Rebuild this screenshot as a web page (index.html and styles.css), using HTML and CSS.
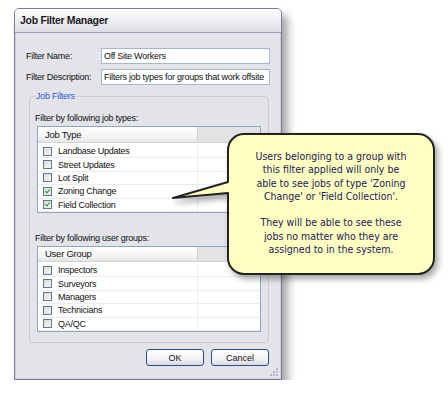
FILE: index.html
```html
<!DOCTYPE html>
<html lang="en">
<head>
    <meta charset="UTF-8">
    <title>Job Filter Manager</title>
    <link rel="stylesheet" href="styles.css">
</head>
<body>
<div class="page">
    <div class="dialog">
        <div class="titlebar">Job Filter Manager</div>
        <div class="dialog-body">
            <div class="field-row">
                <label class="field-label" for="filterName">Filter Name:</label>
                <input class="field-input" type="text" id="filterName" value="Off Site Workers">
            </div>
            <div class="field-row">
                <label class="field-label" for="filterDesc">Filter Description:</label>
                <input class="field-input" type="text" id="filterDesc" value="Filters job types for groups that work offsite">
            </div>

            <fieldset class="group-box">
                <legend>Job Filters</legend>

                <div class="list-label">Filter by following job types:</div>
                <div class="list-view list-jobs">
                    <div class="list-header">
                        <span class="col-main">Job Type</span>
                        <span class="col-extra"></span>
                    </div>
                    <div class="list-rows">
                        <div class="list-row"><span class="col-main"><span class="check"></span>Landbase Updates</span><span class="col-extra"></span></div>
                        <div class="list-row"><span class="col-main"><span class="check"></span>Street Updates</span><span class="col-extra"></span></div>
                        <div class="list-row"><span class="col-main"><span class="check"></span>Lot Split</span><span class="col-extra"></span></div>
                        <div class="list-row"><span class="col-main"><span class="check checked"></span>Zoning Change</span><span class="col-extra"></span></div>
                        <div class="list-row"><span class="col-main"><span class="check checked"></span>Field Collection</span><span class="col-extra"></span></div>
                        <div class="list-fill"><span class="col-main"></span><span class="col-extra"></span></div>
                    </div>
                </div>

                <div class="list-label second">Filter by following user groups:</div>
                <div class="list-view list-groups">
                    <div class="list-header">
                        <span class="col-main">User Group</span>
                        <span class="col-extra"></span>
                    </div>
                    <div class="list-rows">
                        <div class="list-row"><span class="col-main"><span class="check"></span>Inspectors</span><span class="col-extra"></span></div>
                        <div class="list-row"><span class="col-main"><span class="check"></span>Surveyors</span><span class="col-extra"></span></div>
                        <div class="list-row"><span class="col-main"><span class="check"></span>Managers</span><span class="col-extra"></span></div>
                        <div class="list-row"><span class="col-main"><span class="check"></span>Technicians</span><span class="col-extra"></span></div>
                        <div class="list-row"><span class="col-main"><span class="check"></span>QA/QC</span><span class="col-extra"></span></div>
                        <div class="list-fill"><span class="col-main"></span><span class="col-extra"></span></div>
                    </div>
                </div>
            </fieldset>

            <div class="button-row">
                <button class="dlg-button">OK</button>
                <button class="dlg-button">Cancel</button>
            </div>
        </div>
        <svg class="grip" width="9" height="9" viewBox="0 0 9 9">
            <rect x="6" y="0" width="2" height="2" fill="#b8b8c4"/>
            <rect x="3" y="3" width="2" height="2" fill="#b8b8c4"/>
            <rect x="6" y="3" width="2" height="2" fill="#b8b8c4"/>
            <rect x="0" y="6" width="2" height="2" fill="#b8b8c4"/>
            <rect x="3" y="6" width="2" height="2" fill="#b8b8c4"/>
            <rect x="6" y="6" width="2" height="2" fill="#b8b8c4"/>
        </svg>
    </div>
</div>

<!-- callout balloon over the dialog -->
<svg class="callout-shape" width="448" height="401" viewBox="0 0 448 401">
    <path d="M 244 134 H 418 A 16 16 0 0 1 434 150 V 258 A 16 16 0 0 1 418 274 H 244 A 16 16 0 0 1 228 258 V 193 L 173 198 L 228 182 V 150 A 16 16 0 0 1 244 134 Z"
          fill="#ffffc2" stroke="#222222" stroke-width="2" stroke-linejoin="round"/>
</svg>
<div class="callout-text">
    Users belonging to a group with<br>
    this filter applied will only be<br>
    able to see jobs of type 'Zoning<br>
    Change' or 'Field Collection'.<br>
    <br>
    They will be able to see these<br>
    jobs no matter who they are<br>
    assigned to in the system.
</div>
</body>
</html>
```

FILE: styles.css
```css
body {
    margin: 0;
    background: #ffffff;
    font-family: "Liberation Sans", Arial, sans-serif;
}
.page {
    padding: 8px 0 0 14px;
}
.dialog {
    position: relative;
    box-sizing: border-box;
    width: 268px;
    height: 372px;
    background: #e4e3ea;
    border: 1px solid #7c7c9a;
    border-radius: 5px 5px 0 0;
    box-shadow: inset 0 0 0 1px #cfcfdc, 6px 7px 9px rgba(0, 0, 0, 0.35);
}
.titlebar {
    height: 23px;
    line-height: 23px;
    padding-left: 5px;
    font-size: 10.5px;
    font-weight: bold;
    color: #1b1b24;
    letter-spacing: -0.3px;
    background: linear-gradient(#ffffff, #ececf1 60%, #dedde6);
    border-bottom: 1px solid #9c9cb4;
    border-radius: 4px 4px 0 0;
}
.dialog-body {
    padding: 15px 11px 0 11px;
    font-size: 9px;
    color: #111111;
    letter-spacing: -0.25px;
}
.field-row {
    display: flex;
    align-items: center;
    height: 16px;
    margin-bottom: 5px;
}
.field-row + .field-row {
    margin-bottom: 0;
}
.field-label {
    width: 75px;
}
.field-input {
    box-sizing: border-box;
    width: 169px;
    height: 16px;
    margin: 0;
    padding: 0 2px;
    border: 1px solid #a6b8cc;
    background: #ffffff;
    font-family: inherit;
    font-size: 9px;
    letter-spacing: -0.25px;
    color: #111111;
}
.group-box {
    margin: 5px 1px 0 3px;
    padding: 2px 7px 10px 7px;
    border: 1px solid #cdccd6;
    border-radius: 4px;
}
.group-box legend {
    margin-left: -2px;
    padding: 0 1px;
    color: #2a5bd6;
    font-size: 9px;
    line-height: 12px;
}
.list-label {
    line-height: 12px;
    margin: 8px 0 2px -2px;
}
.list-label.second {
    margin-top: 19px;
}
.list-view {
    box-sizing: border-box;
    background: #ffffff;
    border: 1px solid #8fa6bf;
    overflow: hidden;
    display: flex;
    flex-direction: column;
}
.list-jobs {
    height: 87px;
}
.list-jobs .list-header {
    height: 15px;
    line-height: 17px;
}
.list-groups {
    height: 86px;
}
.list-header {
    display: flex;
    flex: none;
    height: 14px;
    line-height: 16px;
    background: linear-gradient(#ffffff, #f3f3f3 70%, #e4e4e4);
    border-bottom: 1px solid #d4d4d4;
    font-size: 9.5px;
}
.list-header .col-main {
    padding-left: 7px;
    border-right: 1px solid #d0d0d0;
}
.list-header .col-extra {
    background: #e3e3e6;
}
.col-main {
    box-sizing: border-box;
    width: 160px;
    display: flex;
    align-items: center;
}
.col-extra {
    flex: 1;
}
.list-rows {
    flex: 1;
    display: flex;
    flex-direction: column;
    padding-top: 2px;
}
.list-row {
    display: flex;
    flex: none;
    height: 13.4px;
    border-bottom: 1px solid #ececec;
    box-sizing: border-box;
}
.list-row .col-main,
.list-fill .col-main {
    border-right: 1px solid #ececec;
    padding-left: 5px;
}
.list-fill {
    flex: 1;
    display: flex;
}
.check {
    box-sizing: border-box;
    width: 9px;
    height: 9px;
    margin-right: 6px;
    border: 1px solid #5a7794;
    background: linear-gradient(135deg, #dcdcd6, #f6f6f4);
    position: relative;
}
.check.checked::after {
    content: "";
    position: absolute;
    left: 2px;
    top: 0px;
    width: 2px;
    height: 4px;
    border: solid #21a121;
    border-width: 0 1.5px 1.5px 0;
    transform: rotate(40deg);
}
.button-row {
    display: flex;
    justify-content: flex-end;
    gap: 7px;
    margin: 6px 1px 0 0;
}
.dlg-button {
    box-sizing: border-box;
    width: 58px;
    height: 17px;
    padding: 0;
    border: 1px solid #2d4f86;
    border-radius: 3px;
    background: linear-gradient(#ffffff, #f1f1f4 60%, #d9d9e2);
    font-family: inherit;
    font-size: 9px;
    color: #111111;
}
.grip {
    position: absolute;
    right: 2px;
    bottom: 2px;
}
.callout-shape {
    position: absolute;
    left: 0;
    top: 0;
    filter: drop-shadow(3px 4px 3px rgba(0, 0, 0, 0.35));
}
.callout-text {
    position: absolute;
    left: 228px;
    top: 150px;
    width: 206px;
    text-align: center;
    font-family: "DejaVu Sans Condensed", "DejaVu Sans", sans-serif;
    font-size: 10.5px;
    line-height: 13.3px;
    color: #22205a;
}
```
